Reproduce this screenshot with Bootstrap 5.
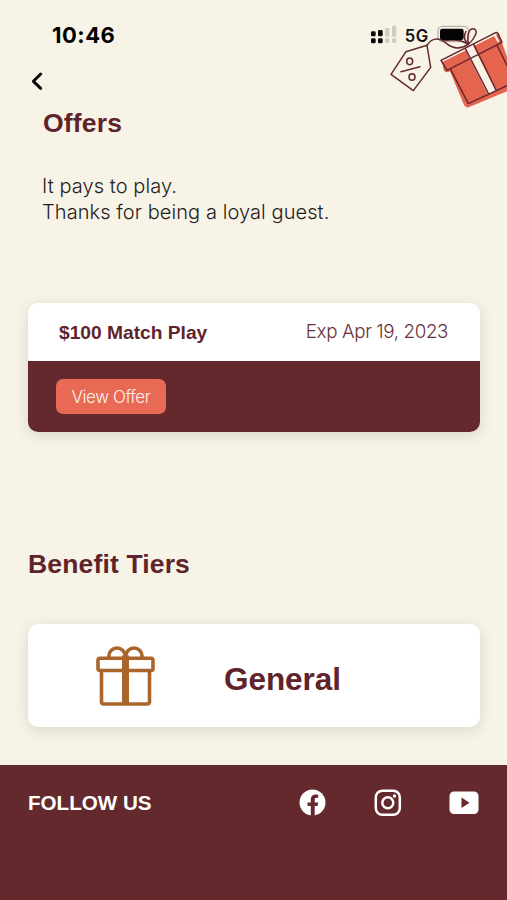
<!DOCTYPE html>
<html lang="en">
<head>
<meta charset="utf-8">
<meta name="viewport" content="width=device-width, initial-scale=1">
<title>Offers</title>
<link href="https://cdn.jsdelivr.net/npm/bootstrap@5.3.0/dist/css/bootstrap.min.css" rel="stylesheet">
<style>
body{background:#f7f3e7;font-family:Inter,"Liberation Sans",sans-serif;color:#1f211d}
.screen{height:900px;overflow:hidden}
.brand-bold{font-family:"Liberation Sans",Arial,sans-serif;font-weight:700;color:#5f242b;line-height:1;white-space:nowrap}
.brand-light{font-weight:300;white-space:nowrap}
.status{height:68px;padding:22px 0 0 52px}
.clock{font:700 22px/26px Inter,sans-serif;color:#000;letter-spacing:.5px}
.art{top:10px;left:360px}
.art text{font:600 50px Inter,sans-serif}
.back{height:26px;padding-left:31px}
.title{font-size:26.5px;padding:16px 0 0 43px;height:79px;letter-spacing:.2px}
.intro{font-size:20px;line-height:26px;padding-left:42px;height:130px;letter-spacing:.08px}
.panel{border:0;border-radius:10px;box-shadow:0 3px 14px rgba(80,80,50,.17);overflow:hidden;margin:0 27px 0 28px;background:#fff}
.offer-head{height:58px;padding:1px 32px 0 31px}
.offer-name{font-size:19.2px}
.offer-date{font-size:18.8px;color:#6c3139;letter-spacing:-.4px}
.offer-foot{height:71px;padding:18px 28px;background:#64292c}
.btn-offer{background:#e86a55;color:#fff3ea;width:110px;height:35px;border-radius:7px;border:0;padding:0;font-size:17px;line-height:34px;letter-spacing:-.45px}
.btn-offer:hover{background:#d95f4b;color:#fff}
.tiers{font-size:26.5px;padding:119px 0 0 28px;height:192px;letter-spacing:.15px}
.tier{height:103px}
.tier-icon{margin:20px 0 0 67px}
.tier-name{font-size:31.5px;margin:40px 0 0 67px;letter-spacing:-.05px}
.foot{background:#64292c;height:135px;margin-top:38px;padding:22px 27px 0 28px}
.foot-label{color:#fff;font-size:20.6px;margin-top:6px}
.social{gap:47px}
</style>
</head>
<body>
<main class="screen position-relative">
  <header class="status"><div class="clock">10:46</div></header>
  <svg class="art position-absolute" width="147" height="110" viewBox="0 0 441 330" fill="none" stroke-linecap="round" stroke-linejoin="round">
    <g fill="#080808"><rect x="33" y="64" width="14" height="15" rx="4"/><rect x="54" y="60" width="14" height="19" rx="4"/><rect x="33" y="85" width="14" height="15" rx="4"/><rect x="54" y="85" width="14" height="15" rx="4"/></g>
    <g fill="#cfccc2"><rect x="75" y="54" width="13" height="26" rx="4"/><rect x="96" y="47" width="13" height="33" rx="4"/><rect x="75" y="85" width="13" height="14" rx="4"/><rect x="96" y="85" width="13" height="14" rx="4"/></g>
    <text x="134" y="95" fill="#111" letter-spacing="1.500">5G</text>
    <rect x="234" y="49" width="92" height="46" rx="14" stroke="#b5b2aa" stroke-width="4"/>
    <path d="M247 156L390 84l26-14 25 70v104L326 292q-10 2-14-7L270 184q-14 8-20-7z" fill="#e5644e"/>
    <path d="M314 116l24-12 70 138-24 13z" fill="#f9f0e6"/>
    <path d="M253 149l62-30M346 101l58-27 10 19" stroke="#f9f0e6" stroke-width="6"/>
    <g stroke="#64292f" stroke-width="4.500">
      <path d="M243 151L407 68q5-1 7 3l12 26-165 84zM272 179l53 102 116-54M316 116l70 136M341 103l67 137M412 108l29 58"/>
      <path d="M138 125l63-19 11 66-52 70-67-49zM123 185l57-15"/>
      <ellipse cx="149" cy="154" rx="9" ry="10"/><ellipse cx="156" cy="201" rx="9" ry="10"/>
      <path d="M201 106c15-24 37-24 59-5 22 18 45 15 65 2-25-17-49-13-72-12M265 91c23-10 41 4 60 12"/>
      <path d="M326 102c-7-26 1-49 17-45 14 5-2 32-17 45zM326 102c-17-11-14-29-8-38"/>
    </g>
    <rect x="240" y="56" width="71" height="34" rx="7" fill="#050505"/>
  </svg>
  <div class="back"><svg class="d-block" width="14" height="26" viewBox="0 0 14 26" fill="none" stroke="#080808" stroke-width="3" stroke-linecap="round" stroke-linejoin="round"><path d="M9.700 6L2.400 13.300l7.300 7"/></svg></div>
  <h1 class="brand-bold title mb-0">Offers</h1>
  <p class="brand-light intro mb-0">It pays to play.<br>Thanks for being a loyal guest.</p>
  <section class="card panel">
    <div class="offer-head d-flex align-items-center justify-content-between">
      <span class="brand-bold offer-name">$100 Match Play</span>
      <span class="brand-light offer-date">Exp Apr 19, 2023</span>
    </div>
    <div class="offer-foot"><button class="btn btn-offer brand-light">View Offer</button></div>
  </section>
  <h2 class="brand-bold tiers mb-0">Benefit Tiers</h2>
  <section class="card panel tier flex-row">
    <svg class="tier-icon" width="62" height="64" viewBox="0 0 62 64" fill="none" stroke="#a9652b" stroke-width="3.600" stroke-linejoin="round">
      <rect x="3" y="14.300" width="55" height="12.200" rx="2"/>
      <path d="M6.500 26.500v31q0 2.500 2.500 2.500h43q2.500 0 2.500-2.500v-31M14 13.500V12a8 8 0 0 1 16 0v2.500M31 14.500V12a8 8 0 0 1 16 0v1.500"/>
      <path d="M30.500 11.500v48" stroke-width="7"/>
    </svg>
    <span class="brand-bold tier-name">General</span>
  </section>
  <footer class="foot d-flex justify-content-between align-items-start">
    <span class="brand-bold foot-label">FOLLOW US</span>
    <div class="social d-flex align-items-center">
      <svg width="28" height="30" viewBox="0 0 28 30"><circle cx="13.500" cy="15.500" r="13" fill="#fff"/><path d="M11.800 29V19H8.500v-3.600h3.300v-2.800c0-3.500 2-5.100 4.900-5.100 1.300 0 2.500.2 2.500.2v3h-1.500c-1.600 0-2 .9-2 1.900v2.800h3.500l-.6 3.600h-2.900v10z" fill="#64292c"/></svg>
      <svg width="28" height="30" viewBox="0 0 28 30" fill="none" stroke="#fff" stroke-width="2.500"><rect x="1.800" y="3.700" width="24" height="24" rx="6.500"/><circle cx="13.800" cy="15.700" r="5.500"/><circle cx="20.500" cy="9" r="1.700" fill="#fff" stroke="none"/></svg>
      <svg width="31" height="30" viewBox="0 0 31 30"><rect x=".5" y="4.500" width="29" height="22.500" rx="4.500" fill="#fff"/><path d="M12.500 10.500l8 5.200-8 5.200z" fill="#64292c"/></svg>
    </div>
  </footer>
</main>
<script src="https://cdn.jsdelivr.net/npm/bootstrap@5.3.0/dist/js/bootstrap.bundle.min.js"></script>
</body>
</html>
